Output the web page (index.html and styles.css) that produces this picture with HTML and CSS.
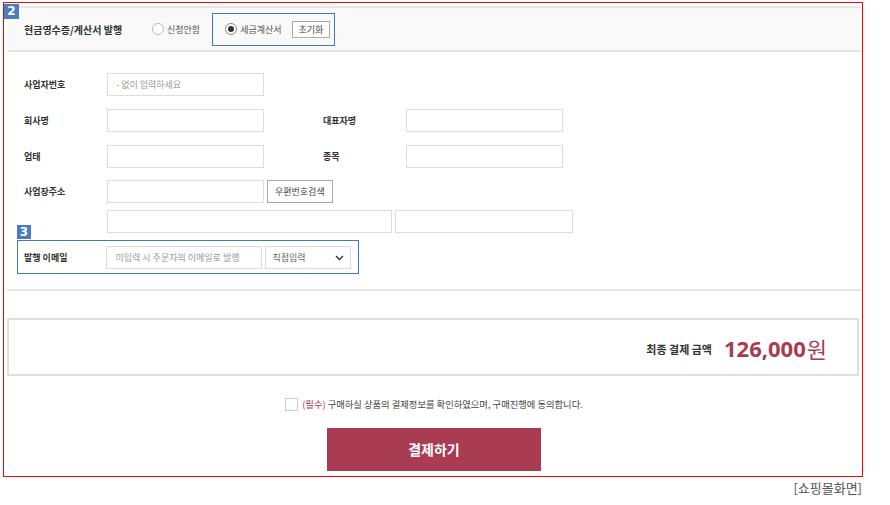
FILE: index.html
```html
<!DOCTYPE html>
<html>
<head>
<title>주문서 - 결제</title>
<link rel="stylesheet" href="styles.css">
</head>
<body>

<div class="frame">
<span class="badge badgeTop">2</span>

<div class="receipt">
<span class="receiptTitle">현금영수증/계산서 발행</span>
<label class="radio"><span class="radioDot"></span>신청안함</label>
<div class="taxBox">
<label class="radio"><span class="radioDot on"></span>세금계산서</label>
<span class="smallBtn">초기화</span>
</div>
</div>

<div class="taxForm">
<div class="row">
<span class="label">사업자번호</span>
<span class="field ph">- 없이 입력하세요</span>
</div>
<div class="row">
<span class="label">회사명</span>
<span class="field"></span>
<span class="label second">대표자명</span>
<span class="field"></span>
</div>
<div class="row">
<span class="label">업태</span>
<span class="field"></span>
<span class="label second">종목</span>
<span class="field"></span>
</div>
<div class="row">
<span class="label">사업장주소</span>
<span class="field"></span>
<span class="smallBtn addrBtn">우편번호검색</span>
</div>
<div class="row addrRow">
<span class="field wide"></span>
<span class="field mid"></span>
</div>
<div class="emailBox">
<span class="badge badgeEmail">3</span>
<span class="label">발행 이메일</span>
<span class="field ph">미입력 시 주문자의 이메일로 발행</span>
<span class="select">직접입력
<svg width="9" height="6" viewBox="0 0 9 6"><path d="M1 1 L4.5 4.5 L8 1" fill="none" stroke="#333" stroke-width="1.4"/></svg>
</span>
</div>
</div>

<div class="divider"></div>

<div class="total">
<span class="totalLabel">최종 결제 금액</span>
<span class="price">126,000</span><span class="won">원</span>
</div>

<div class="agree">
<span class="checkbox"></span>
<span class="req">(필수)</span> 구매하실 상품의 결제정보를 확인하였으며, 구매진행에 동의합니다.
</div>

<div class="payWrap">
<span class="payBtn">결제하기</span>
</div>
</div>

<div class="caption">[쇼핑몰화면]</div>

</body>
</html>
```

FILE: styles.css
```css
body {
    margin: 0;
    background: #fff;
    font-family: "Noto Sans CJK KR", "Noto Sans", sans-serif;
    font-size: 9px;
    color: #333;
}
.frame {
    position: relative;
    width: 854px;
    margin: 2px 0 0 3px;
    padding: 3px 1px 5px 3px;
    border: 1px solid #ff0000;
    box-sizing: content-box;
}
.badge {
    position: absolute;
    width: 14px;
    height: 14px;
    background: #4a7dbf;
    color: #fff;
    font: bold 12px "DejaVu Sans", sans-serif;
    line-height: 14px;
    text-align: center;
}
.badgeTop {
    left: 0;
    top: 1px;
    width: 15px;
    height: 15px;
    line-height: 15px;
}
.badgeEmail {
    left: -1px;
    top: -16px;
}
.receipt {
    display: flex;
    align-items: center;
    height: 42px;
    padding-left: 17px;
    background: #f9f9f9;
    border-top: 2px solid #e6e6e6;
    border-bottom: 2px solid #e6e6e6;
}
.receiptTitle {
    font-weight: bold;
    font-size: 10px;
    width: 128px;
}
.radio {
    display: flex;
    align-items: center;
    color: #555;
}
.radioDot {
    width: 10px;
    height: 10px;
    border: 1px solid #bbb;
    border-radius: 50%;
    background: #fff;
    margin-right: 3px;
    position: relative;
}
.radioDot.on {
    border-color: #888;
}
.radioDot.on:after {
    content: "";
    position: absolute;
    left: 2px;
    top: 2px;
    width: 6px;
    height: 6px;
    border-radius: 50%;
    background: #333;
}
.taxBox {
    display: flex;
    align-items: center;
    margin-left: 12px;
    height: 31px;
    padding: 0 4px 0 12px;
    border: 1px solid #4277c0;
}
.smallBtn {
    margin-left: 10px;
    padding: 0 6px;
    height: 15px;
    line-height: 15px;
    border: 1px solid #aaa;
    background: #fff;
    color: #444;
}
.taxForm {
    padding: 21px 0 0 10px;
}
.row {
    display: flex;
    align-items: center;
    padding-left: 7px;
    margin-bottom: 13px;
}
.label {
    width: 83px;
    font-weight: bold;
}
.label.second {
    margin-left: 59px;
}
.field {
    display: block;
    width: 155px;
    height: 21px;
    line-height: 21px;
    border: 1px solid #dcdcdc;
    background: #fff;
}
.field.ph {
    color: #999;
    padding-left: 8px;
    width: 147px;
}
.field.wide {
    width: 283px;
    margin-left: 83px;
}
.field.mid {
    width: 176px;
    margin-left: 3px;
}
.addrBtn {
    margin-left: 3px;
    height: 21px;
    line-height: 21px;
    padding: 0 7px;
}
.row.addrRow {
    margin-bottom: 0;
}
.row:nth-child(3) {
    margin-bottom: 12px;
}
.row:nth-child(4) {
    margin-bottom: 7px;
}
.emailBox {
    position: relative;
    display: flex;
    align-items: center;
    width: 327px;
    margin-top: 7px;
    padding: 5px 7px 4px 6px;
    border: 1px solid #4277c0;
}
.select {
    display: flex;
    justify-content: space-between;
    align-items: center;
    width: 72px;
    height: 21px;
    margin-left: 3px;
    padding: 0 6px;
    border: 1px solid #dcdcdc;
    color: #666;
}
.divider {
    height: 2px;
    margin-top: 15px;
    background: #e6e6e6;
}
.total {
    display: flex;
    justify-content: flex-end;
    align-items: center;
    height: 53px;
    margin: 27px 2px 0 0;
    padding: 1px 30px 0 0;
    border: 2px solid #dedede;
}
.totalLabel {
    font-weight: bold;
    font-size: 11px;
    margin-right: 12px;
    margin-top: 3px;
}
.price {
    color: #a83b50;
    font: bold 22px "Open Sans", "Noto Sans", sans-serif;
}
.won {
    color: #a83b50;
    font-size: 22px;
    margin-left: 1px;
}
.agree {
    display: flex;
    align-items: center;
    justify-content: center;
    margin-top: 21px;
    font-size: 9.3px;
    color: #444;
    white-space: pre;
}
.checkbox {
    width: 11px;
    height: 11px;
    border: 1px solid #ccc;
    margin-right: 4px;
}
.req {
    color: #a83b50;
}
.payWrap {
    display: flex;
    justify-content: center;
    margin-top: 17px;
}
.payBtn {
    display: block;
    width: 214px;
    height: 43px;
    line-height: 43px;
    background: #a93c52;
    color: #fff;
    font-weight: bold;
    font-size: 14px;
    text-align: center;
}
.caption {
    width: 862px;
    text-align: right;
    font-size: 13px;
    color: #555;
    margin-top: 1px;
}
```
